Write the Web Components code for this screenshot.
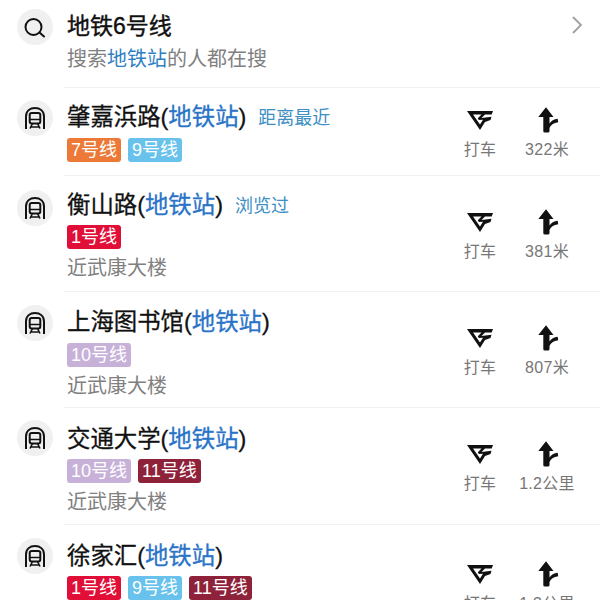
<!DOCTYPE html>
<html lang="zh">
<head>
<meta charset="utf-8">
<style>
    html, body { margin: 0; height: 600px; overflow: hidden; background: #fff; }
    body { font-family: "Liberation Sans", "Noto Sans CJK SC", sans-serif; }
</style>
</head>
<body>
<search-head></search-head>
<station-row name="肇嘉浜路" note="距离最近" lines="7,9" dist="322米" disc="12" top="11" gap="7" h="88"></station-row>
<station-row name="衡山路" note="浏览过" lines="1" place="近武康大楼" dist="381米" disc="14" top="11" gap="6" h="116"></station-row>
<station-row name="上海图书馆" lines="10" place="近武康大楼" dist="807米" disc="13" top="12" gap="7" h="116"></station-row>
<station-row name="交通大学" lines="10,11" place="近武康大楼" dist="1.2公里" disc="12" top="13" gap="6" h="117"></station-row>
<station-row name="徐家汇" lines="1,9,11" dist="1.3公里" disc="13" top="13" gap="6" h="122"></station-row>

<script>
const lineColors = { 1: "#e0062f", 7: "#ec7430", 9: "#62c0ec", 10: "#c5aed8", 11: "#8a1a33" }

const metroIcon = `<svg width="24" height="24" viewBox="0 0 24 24" fill="none" stroke="#111" stroke-width="2">
    <path d="M3 23V10.500C3 5 7 2 12 2s9 3 9 8.500V23"/>
    <rect x="6.700" y="7" width="10.600" height="10.500" rx="2"/>
    <path d="M6.700 13.500h10.600" stroke-width="1.500"/>
    <path d="M9.500 17.500l-2.500 5M14.500 17.500l2.500 5M8 21h8" stroke-width="1.600"/>
</svg>`

const taxiIcon = `<svg width="28" height="24" viewBox="0 0 28 24">
    <path fill="#111" fill-rule="evenodd" d="M1 3H27L25.700 6.500H19L15.500 10 25.500 8.800 24.500 12 19 14 14 22zM7 6.500H15.500L11.800 10.300 12.800 12 17 11.800 14 16.500z"/>
</svg>`

const forkIcon = `<svg width="24" height="28" viewBox="0 0 24 28">
    <path fill="#111" d="M11 1.300L18.500 11H14.500V17.500C16 15 19 13 22.700 12.800L23.200 16.300C18.500 17 15.500 19 14.500 22V25A1.500 1.500 0 0 1 13 26.500H9.800A1.500 1.500 0 0 1 8.300 25V11H3.300z"/>
</svg>`

const searchIcon = `<svg width="24" height="24" viewBox="0 0 24 24" fill="none" stroke="#111" stroke-width="2">
    <circle cx="10.500" cy="12" r="8"/>
    <path d="M16.500 17.500L21 21.500" stroke-linecap="round"/>
</svg>`

class IconDisc extends HTMLElement {
    constructor() {
        super()
        this.attachShadow({ mode: 'open' }).innerHTML = `<style>
            :host {
                display: flex;
                width: 36px;
                height: 36px;
                flex: none;
                align-items: center;
                justify-content: center;
                border-radius: 50%;
                background: #f0f0f0;
            }
        </style><slot></slot>`
    }
}

class SearchHead extends HTMLElement {
    constructor() {
        super()
        this.attachShadow({ mode: 'open' }).innerHTML = `<style>
            :host { display: block; height: 88px; box-sizing: border-box; padding: 9px 17px 0 17px; position: relative; }
            .wrap { display: flex; gap: 14px; }
            .title { font-size: 23px; line-height: 32px; margin-top: 1px; color: #111; -webkit-text-stroke: .4px #111; }
            .sub { font-size: 20px; line-height: 30px; margin-top: 2px; color: #808080; }
            b { font-weight: 400; color: #2f7fc4; }
            .text { flex: 1; }
            .chev { margin-top: 6px; }
            .rule { position: absolute; left: 64px; right: 0; bottom: 0; height: 1px; background: #f2f2f2; }
        </style>
        <div class="wrap">
            <icon-disc>${searchIcon}</icon-disc>
            <div class="text">
                <div class="title">地铁6号线</div>
                <div class="sub">搜索<b>地铁站</b>的人都在搜</div>
            </div>
            <svg class="chev" width="12" height="20" viewBox="0 0 12 20" fill="none" stroke="#a0a0a0" stroke-width="1.800">
                <path d="M2 2l8 8-8 8"/>
            </svg>
        </div>
        <div class="rule"></div>`
    }
}

class LineTag extends HTMLElement {
    constructor() {
        super()
        this.attachShadow({ mode: 'open' }).innerHTML = `<style>
            :host {
                display: block;
                height: 24px;
                padding: 0 4px;
                border-radius: 3px;
                font-size: 18px;
                line-height: 24px;
                color: #fff;
                background: var(--tag, #999);
                opacity: .96;
            }
        </style><slot></slot>`
    }
}

class ActionItem extends HTMLElement {
    constructor() {
        super()
        this.attachShadow({ mode: 'open' }).innerHTML = `<style>
            :host {
                display: flex;
                flex-direction: column;
                align-items: center;
                gap: 5px;
                width: 64px;
                white-space: nowrap;
                font-size: 16px;
                line-height: 22px;
                letter-spacing: .3px;
                color: #777;
            }
            .glyph { height: 28px; display: flex; align-items: center; }
            ::slotted(span) { display: flex; }
        </style>
        <div class="glyph"><slot name="glyph"></slot></div>
        <div>${this.getAttribute("label")}</div>`
    }
}

class StationRow extends HTMLElement {
    connectedCallback() {
        const name = this.getAttribute("name")
        const note = this.getAttribute("note")
        const place = this.getAttribute("place")
        const dist = this.getAttribute("dist")
        const disc = this.getAttribute("disc")
        const top = this.getAttribute("top")
        const gap = this.getAttribute("gap")
        const h = this.getAttribute("h")
        const tags = this.getAttribute("lines").split(",")
            .map(n => `<line-tag style="--tag:${lineColors[n]}">${n}号线</line-tag>`)

        this.attachShadow({ mode: 'open' }).innerHTML = `<style>
            :host { display: flex; position: relative; box-sizing: border-box; height: ${h}px; padding-left: 17px; }
            .wrap { display: flex; flex: 1; min-width: 0; gap: 14px; }
            icon-disc { margin-top: ${disc}px; }
            .main { flex: 1; min-width: 0; padding-top: ${top}px; }
            .title { display: flex; align-items: center; gap: 12px; height: 32px; }
            .name { font-size: 23.4px; color: #111; white-space: nowrap; -webkit-text-stroke: .3px #111; }
            .name b { font-weight: 400; color: #2a74c8; -webkit-text-stroke: .3px #2a74c8; }
            .note { font-size: 18px; padding-top: 1px; color: #3d8fc4; }
            .tags { display: flex; gap: 7px; margin-top: ${gap}px; }
            .place { font-size: 20px; line-height: 28px; margin-top: 5px; color: #808080; }
            .actions { display: flex; gap: 3px; margin: 2px 21px 0 0; align-self: center; }
            .rule { position: absolute; left: 64px; right: 0; bottom: 0; height: 1px; background: #f2f2f2; }
        </style>
        <div class="wrap">
            <icon-disc>${metroIcon}</icon-disc>
            <div class="main">
                <div class="title">
                    <div class="name">${name}(<b>地铁站</b>)</div>
                    ${note ? `<div class="note">${note}</div>` : ""}
                </div>
                <div class="tags">${tags.join("")}</div>
                ${place ? `<div class="place">${place}</div>` : ""}
            </div>
            <div class="actions">
                <action-item label="打车"><span slot="glyph">${taxiIcon}</span></action-item>
                <action-item label="${dist}"><span slot="glyph">${forkIcon}</span></action-item>
            </div>
        </div>
        <div class="rule"></div>`
    }
}

customElements.define("icon-disc", IconDisc)
customElements.define("search-head", SearchHead)
customElements.define("line-tag", LineTag)
customElements.define("action-item", ActionItem)
customElements.define("station-row", StationRow)
</script>
</body>
</html>
